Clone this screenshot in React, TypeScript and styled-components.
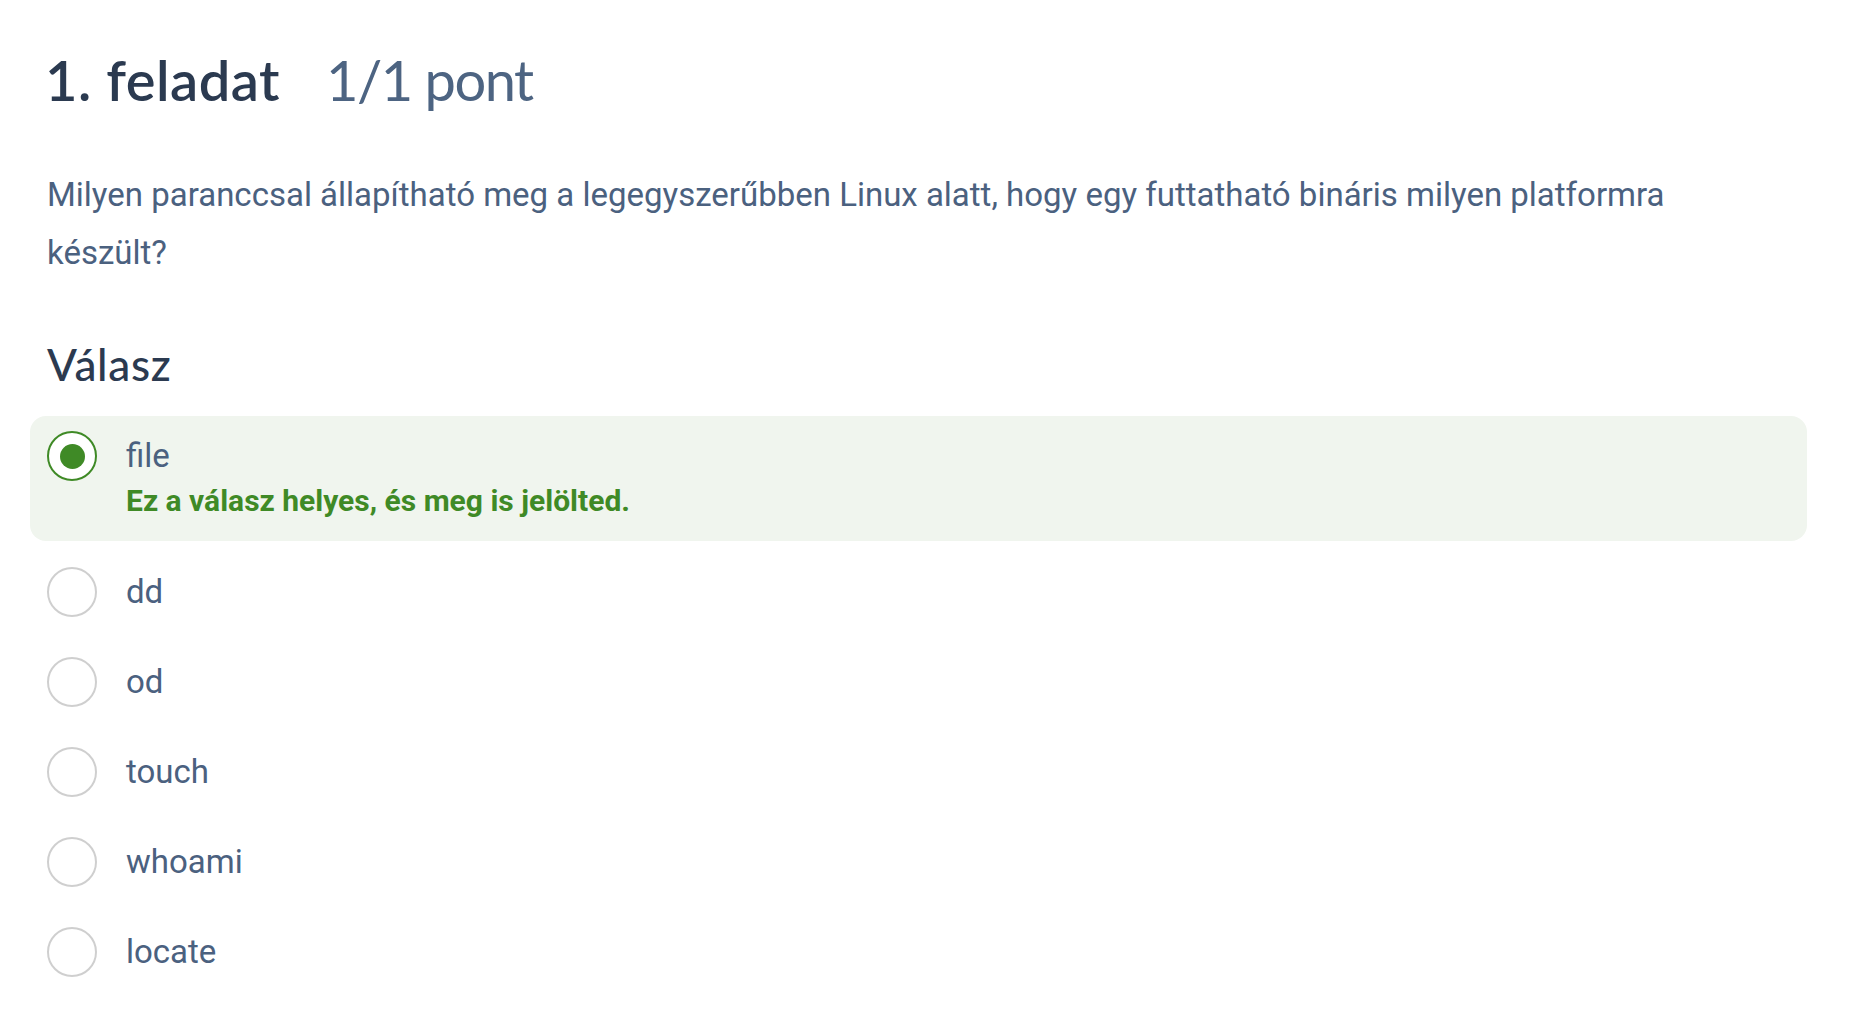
import React from "react";
import styled, { createGlobalStyle } from "styled-components";

const Global = createGlobalStyle`
  html, body { margin: 0; padding: 0; background: #ffffff; }
  body { font-family: Roboto, "Noto Sans", Arial, sans-serif; }
`;

const Page = styled.main`
  padding: 44px 45px 40px 30px;
  display: flex;
  flex-direction: column;
`;

const TitleRow = styled.h1`
  margin: 0;
  padding-left: 15px;
  display: flex;
  align-items: baseline;
  gap: 46px;
  font-family: Lato, "Noto Sans", sans-serif;
  font-size: 56px;
  line-height: 72px;
  font-weight: 600;
  letter-spacing: 0.5px;
  color: #2b3a50;
`;

const Points = styled.span`
  font-weight: 400;
  letter-spacing: -1.5px;
  color: #4d6482;
`;

const Question = styled.p`
  margin: 50px 0 0;
  padding-left: 17px;
  max-width: 1680px;
  font-family: Roboto, sans-serif;
  font-size: 33px;
  line-height: 58px;
  color: #4b617f;
`;

const SectionTitle = styled.h2`
  margin: 57px 0 0;
  padding-left: 17px;
  font-family: Lato, "Noto Sans", sans-serif;
  font-size: 44px;
  line-height: 50px;
  font-weight: 500;
  letter-spacing: 0.7px;
  color: #2b3a50;
`;

const Options = styled.div`
  margin-top: 27px;
  display: flex;
  flex-direction: column;
`;

const Row = styled.label<{ $selected?: boolean }>`
  display: flex;
  align-items: flex-start;
  gap: 29px;
  padding: ${(p) => (p.$selected ? "15px 17px 20px" : "20px 17px")};
  margin-bottom: ${(p) => (p.$selected ? "6px" : "0")};
  border-radius: 16px;
  background: ${(p) => (p.$selected ? "#f0f5ee" : "transparent")};
`;

const Radio = styled.span<{ $checked?: boolean }>`
  flex: none;
  width: 50px;
  height: 50px;
  box-sizing: border-box;
  border-radius: 50%;
  border: 2px solid ${(p) => (p.$checked ? "#3f8a26" : "#cfcfcf")};
  background: #ffffff;
  display: flex;
  align-items: center;
  justify-content: center;
`;

const Dot = styled.span`
  width: 25px;
  height: 25px;
  border-radius: 50%;
  background: #3f8a26;
`;

const OptionText = styled.div`
  display: flex;
  flex-direction: column;
`;

const Label = styled.span`
  font-family: Roboto, sans-serif;
  font-size: 33px;
  line-height: 50px;
  color: #4b617f;
`;

const Feedback = styled.span`
  font-family: Roboto, sans-serif;
  font-size: 30px;
  line-height: 40px;
  font-weight: 700;
  color: #3f8a26;
`;

const options = ["file", "dd", "od", "touch", "whoami", "locate"];

export default function App() {
  return (
    <>
      <Global />
      <Page>
        <TitleRow>
          <span>1. feladat</span>
          <Points>1/1 pont</Points>
        </TitleRow>
        <Question>
          Milyen paranccsal állapítható meg a legegyszerűbben Linux alatt, hogy
          egy futtatható bináris milyen platformra készült?
        </Question>
        <SectionTitle>Válasz</SectionTitle>
        <Options>
          {options.map((o, i) => (
            <Row key={o} $selected={i === 0}>
              <Radio $checked={i === 0}>{i === 0 && <Dot />}</Radio>
              <OptionText>
                <Label>{o}</Label>
                {i === 0 && (
                  <Feedback>Ez a válasz helyes, és meg is jelölted.</Feedback>
                )}
              </OptionText>
            </Row>
          ))}
        </Options>
      </Page>
    </>
  );
}
